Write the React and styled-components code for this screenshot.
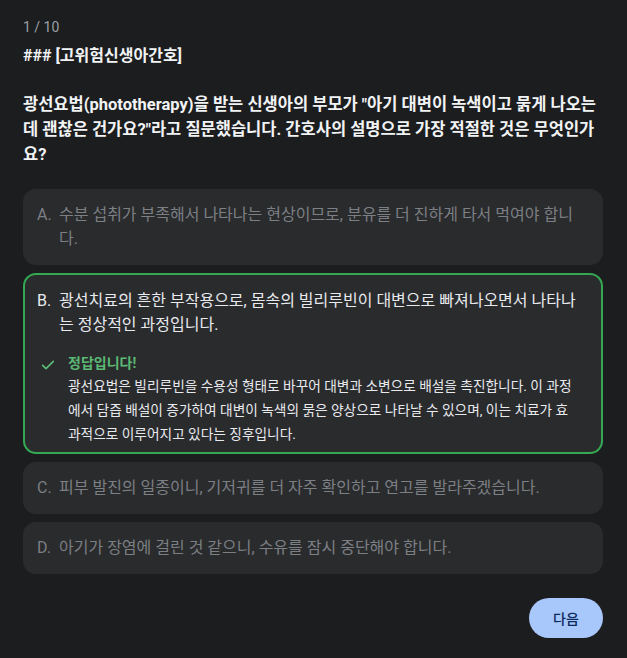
import React from "react";
import styled, { createGlobalStyle } from "styled-components";

const GlobalStyle = createGlobalStyle`
  html, body {
    margin: 0;
    padding: 0;
    background-color: #1c1d1f;
  }
  body {
    font-family: Roboto, "Noto Sans CJK KR", sans-serif;
    color: #e3e3e3;
  }
`;

const Page = styled.div`
  min-height: 658px;
  box-sizing: border-box;
  padding: 17px 24px 20px 23px;
  display: flex;
  flex-direction: column;
`;

const Counter = styled.div`
  font-size: 14px;
  line-height: 20px;
  color: #9aa0a6;
`;

const Topic = styled.div`
  margin-top: 8px;
  font-size: 16px;
  line-height: 22px;
  font-weight: 700;
  color: #f1f3f4;
`;

const Question = styled.p`
  margin: 25px 0 22px;
  font-size: 16.5px;
  line-height: 25px;
  font-weight: 700;
  color: #f1f3f4;
`;

const Options = styled.div`
  display: flex;
  flex-direction: column;
  gap: 8px;
`;

const Option = styled.div`
  background-color: #2a2b2d;
  border-radius: 13px;
  border: 2px solid ${(p) => (p.$correct ? "#34a853" : "transparent")};
  padding: ${(p) => (p.$correct ? "14px 24px 6px 12px" : "12px 24px 12px 12px")};
`;

const OptionText = styled.div`
  display: flex;
  font-size: 16px;
  line-height: 24px;
  color: ${(p) => (p.$active ? "#e8eaed" : "#7c7f84")};
`;

const Letter = styled.span`
  flex: 0 0 22px;
`;

const Feedback = styled.div`
  display: flex;
  gap: 12px;
  margin-top: 15px;
  padding-left: 3px;
`;

const CheckIcon = styled.svg`
  flex: 0 0 16px;
  margin-top: 5px;
`;

const FeedbackBody = styled.div`
  display: flex;
  flex-direction: column;
`;

const FeedbackTitle = styled.div`
  font-size: 14px;
  line-height: 22px;
  font-weight: 700;
  color: #5bb974;
`;

const FeedbackText = styled.div`
  font-size: 13.7px;
  line-height: 24px;
  color: #e8eaed;
`;

const Footer = styled.div`
  display: flex;
  justify-content: flex-end;
  margin-top: 24px;
`;

const NextButton = styled.button`
  width: 74px;
  height: 40px;
  border: none;
  border-radius: 20px;
  background-color: #a8c7fa;
  color: #0a2a5c;
  font-family: Roboto, "Noto Sans CJK KR", sans-serif;
  font-size: 14px;
  font-weight: 500;
  cursor: pointer;
`;

const options = [
  { letter: "A.", text: "수분 섭취가 부족해서 나타나는 현상이므로, 분유를 더 진하게 타서 먹여야 합니다." },
  {
    letter: "B.",
    text: "광선치료의 흔한 부작용으로, 몸속의 빌리루빈이 대변으로 빠져나오면서 나타나는 정상적인 과정입니다.",
    correct: true,
  },
  { letter: "C.", text: "피부 발진의 일종이니, 기저귀를 더 자주 확인하고 연고를 발라주겠습니다." },
  { letter: "D.", text: "아기가 장염에 걸린 것 같으니, 수유를 잠시 중단해야 합니다." },
];

export default function App() {
  return (
    <>
      <GlobalStyle />
      <Page>
        <Counter>1 / 10</Counter>
        <Topic>### [고위험신생아간호]</Topic>
        <Question>
          광선요법(phototherapy)을 받는 신생아의 부모가 "아기 대변이 녹색이고 묽게 나오는데 괜찮은 건가요?"라고
          질문했습니다. 간호사의 설명으로 가장 적절한 것은 무엇인가요?
        </Question>
        <Options>
          {options.map((o) => (
            <Option key={o.letter} $correct={o.correct}>
              <OptionText $active={o.correct}>
                <Letter>{o.letter}</Letter>
                <span>{o.text}</span>
              </OptionText>
              {o.correct && (
                <Feedback>
                  <CheckIcon width="16" height="16" viewBox="0 0 24 24" fill="none">
                    <path d="M4 12.5l5 5L20 6.5" stroke="#5bb974" strokeWidth="2.6" strokeLinecap="round" strokeLinejoin="round" />
                  </CheckIcon>
                  <FeedbackBody>
                    <FeedbackTitle>정답입니다!</FeedbackTitle>
                    <FeedbackText>
                      광선요법은 빌리루빈을 수용성 형태로 바꾸어 대변과 소변으로 배설을 촉진합니다. 이 과정에서 담즙 배설이
                      증가하여 대변이 녹색의 묽은 양상으로 나타날 수 있으며, 이는 치료가 효과적으로 이루어지고 있다는 징후입니다.
                    </FeedbackText>
                  </FeedbackBody>
                </Feedback>
              )}
            </Option>
          ))}
        </Options>
        <Footer>
          <NextButton>다음</NextButton>
        </Footer>
      </Page>
    </>
  );
}
